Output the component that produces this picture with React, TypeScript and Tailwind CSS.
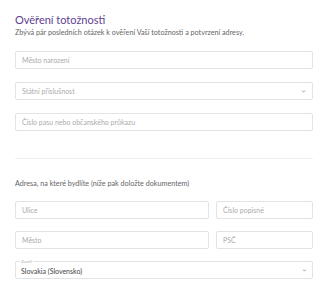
import { ChevronDown } from "lucide-react";

type FieldProps = {
  placeholder: string;
  className?: string;
  select?: boolean;
};

function Field({ placeholder, className = "", select }: FieldProps) {
  return (
    <div
      className={`flex h-[18px] items-center justify-between rounded-[2px] border border-[#e3e3e3] bg-white px-[6px] ${className}`}
    >
      <span className="text-[7px] leading-none text-[#ababab]">{placeholder}</span>
      {select && <ChevronDown className="h-[5px] w-[5px] text-[#666]" strokeWidth={3} />}
    </div>
  );
}

export default function App() {
  return (
    <div className="h-[293px] w-[325px] bg-white pl-[15px] pr-[12px] pt-[13px] font-['Lato',sans-serif]">
      <h2 className="text-[11px] leading-[13px] font-normal text-[#5e4290]">Ověření totožnosti</h2>
      <p className="mt-[2px] text-[7.2px] leading-[10px] text-[#666]">
        Zbývá pár posledních otázek k ověření Vaší totožnosti a potvrzení adresy.
      </p>

      <div className="mt-[13px] flex flex-col gap-[13px]">
        <Field placeholder="Město narození" />
        <Field placeholder="Státní příslušnost" select />
        <Field placeholder="Číslo pasu nebo občanského průkazu" />
      </div>

      <div className="mt-[27px] h-px bg-[#f0f0f0]" />

      <p className="mt-[20px] text-[7.2px] leading-[10px] text-[#666]">
        Adresa, na které bydlíte (níže pak doložte dokumentem)
      </p>

      <div className="mt-[12px] flex flex-col gap-[12px]">
        <div className="flex gap-[7px]">
          <Field placeholder="Ulice" className="flex-1" />
          <Field placeholder="Číslo popisné" className="w-[97px]" />
        </div>
        <div className="flex gap-[7px]">
          <Field placeholder="Město" className="flex-1" />
          <Field placeholder="PSČ" className="w-[97px]" />
        </div>
        <div className="relative flex h-[18px] items-center justify-between rounded-[2px] border border-[#e3e3e3] bg-white px-[5px]">
          <span className="absolute -top-[3px] left-[4px] bg-white px-[1px] text-[4.5px] leading-[5px] text-[#ababab]">
            Země
          </span>
          <span className="pt-[2px] text-[7px] leading-none text-[#444]">Slovakia (Slovensko)</span>
          <ChevronDown className="h-[5px] w-[5px] text-[#666]" strokeWidth={3} />
        </div>
      </div>
    </div>
  );
}
